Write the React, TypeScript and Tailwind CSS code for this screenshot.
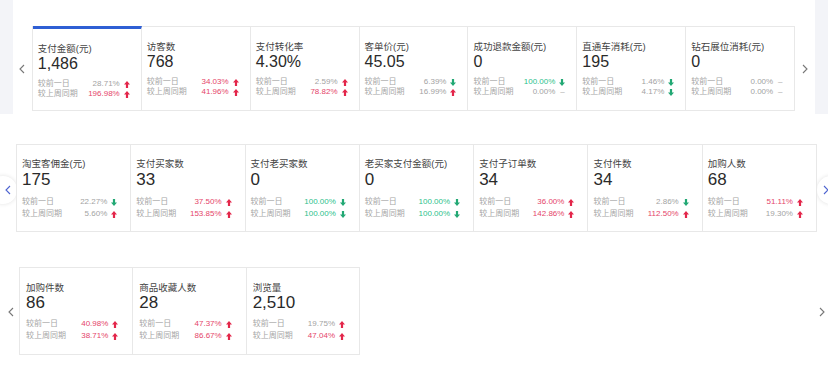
import React from 'react';

type Row = { p: string; dir: 'up' | 'down' | 'flat'; tone: 'gray' | 'red' | 'green' };
type Metric = { title: string; value: string; day: Row; week: Row };

const r = (p: string, dir: Row['dir'], tone: Row['tone']): Row => ({ p, dir, tone });

const row1: Metric[] = [
  { title: '支付金额(元)', value: '1,486', day: r('28.71%', 'up', 'gray'), week: r('196.98%', 'up', 'red') },
  { title: '访客数', value: '768', day: r('34.03%', 'up', 'red'), week: r('41.96%', 'up', 'red') },
  { title: '支付转化率', value: '4.30%', day: r('2.59%', 'up', 'gray'), week: r('78.82%', 'up', 'red') },
  { title: '客单价(元)', value: '45.05', day: r('6.39%', 'down', 'gray'), week: r('16.99%', 'up', 'gray') },
  { title: '成功退款金额(元)', value: '0', day: r('100.00%', 'down', 'green'), week: r('0.00%', 'flat', 'gray') },
  { title: '直通车消耗(元)', value: '195', day: r('1.46%', 'down', 'gray'), week: r('4.17%', 'down', 'gray') },
  { title: '钻石展位消耗(元)', value: '0', day: r('0.00%', 'flat', 'gray'), week: r('0.00%', 'flat', 'gray') },
];

const row2: Metric[] = [
  { title: '淘宝客佣金(元)', value: '175', day: r('22.27%', 'down', 'gray'), week: r('5.60%', 'up', 'gray') },
  { title: '支付买家数', value: '33', day: r('37.50%', 'up', 'red'), week: r('153.85%', 'up', 'red') },
  { title: '支付老买家数', value: '0', day: r('100.00%', 'down', 'green'), week: r('100.00%', 'down', 'green') },
  { title: '老买家支付金额(元)', value: '0', day: r('100.00%', 'down', 'green'), week: r('100.00%', 'down', 'green') },
  { title: '支付子订单数', value: '34', day: r('36.00%', 'up', 'red'), week: r('142.86%', 'up', 'red') },
  { title: '支付件数', value: '34', day: r('2.86%', 'down', 'gray'), week: r('112.50%', 'up', 'red') },
  { title: '加购人数', value: '68', day: r('51.11%', 'up', 'red'), week: r('19.30%', 'up', 'gray') },
];

const row3: Metric[] = [
  { title: '加购件数', value: '86', day: r('40.98%', 'up', 'red'), week: r('38.71%', 'up', 'red') },
  { title: '商品收藏人数', value: '28', day: r('47.37%', 'up', 'red'), week: r('86.67%', 'up', 'red') },
  { title: '浏览量', value: '2,510', day: r('19.75%', 'up', 'gray'), week: r('47.04%', 'up', 'red') },
];

const Mark = ({ dir }: { dir: Row['dir'] }) => {
  if (dir === 'flat') return <span className="w-[6px] text-center text-[#aaa]">–</span>;
  if (dir === 'up')
    return (
      <svg width="6" height="7" viewBox="0 0 6 7">
        <path d="M3 0L6 3.4H4.1V7H1.9V3.4H0Z" fill="#e3264a" />
      </svg>
    );
  return (
    <svg width="6" height="7" viewBox="0 0 6 7">
      <path d="M3 7L0 3.6H1.9V0H4.1V3.6H6Z" fill="#22a874" />
    </svg>
  );
};

const toneClass = (t: Row['tone']) =>
  t === 'red' ? 'text-[#e5456a]' : t === 'green' ? 'text-[#2cbf8c]' : 'text-[#a3a3a3]';

const Line = ({ label, row, lh }: { label: string; row: Row; lh: string }) => (
  <div className={`flex items-center justify-between text-[8px] ${lh}`}>
    <span className="text-[#a6a6a6]">{label}</span>
    <span className="flex items-center gap-[4px]">
      <span className={toneClass(row.tone)}>{row.p}</span>
      <Mark dir={row.dir} />
    </span>
  </div>
);

const Chevron = ({ right, color = '#777' }: { right?: boolean; color?: string }) => (
  <svg width="6" height="10" viewBox="0 0 6 10">
    <polyline
      points={right ? '1,1 5,5 1,9' : '5,1 1,5 5,9'}
      fill="none"
      stroke={color}
      strokeWidth="1.1"
    />
  </svg>
);

const Card = ({
  m,
  active,
  pad,
  rowLh,
  valueCls,
}: {
  m: Metric;
  active?: boolean;
  pad: string;
  rowLh: string;
  valueCls: string;
}) => (
  <div
    className={`flex flex-col border-r border-[#e8e8e8] bg-white ${pad} ${
      active ? '-mt-px border-t-[3px] border-t-[#2f5fd4] pt-[12px]' : ''
    }`}
  >
    <div className="text-[9.5px] leading-[12px] text-[#444] whitespace-nowrap">{m.title}</div>
    <div className={`text-[#2a2a2a] ${valueCls}`}>{m.value}</div>
    <div className="mt-[6px]">
      <Line label="较前一日" row={m.day} lh={rowLh} />
      <Line label="较上周同期" row={m.week} lh={rowLh} />
    </div>
  </div>
);

export default function App() {
  return (
    <div
      className="w-[828px] h-[369px] bg-white overflow-hidden"
      style={{ fontFamily: '"Liberation Sans", "Noto Sans CJK SC", sans-serif' }}
    >
      {/* first block */}
      <div className="h-[114px] bg-[#f3f4f8] px-[13px]">
        <div className="flex h-full bg-white pt-[26px]">
          <div className="flex h-[85px] w-[19px] items-center justify-center">
            <Chevron />
          </div>
          <div className="grid h-[85px] w-[770px] grid-cols-7 border-y border-l border-[#e8e8e8]">
            {row1.map((m, i) => (
              <Card
                key={m.title}
                m={m}
                active={i === 0}
                pad="pt-[14px] pl-[5px] pr-[11px]"
                rowLh="leading-[10px]"
                valueCls="text-[16px] leading-[18px]"
              />
            ))}
          </div>
          <div className="flex h-[85px] w-[20px] items-center justify-center">
            <Chevron right />
          </div>
        </div>
      </div>

      {/* second block */}
      <div className="mt-[30px] flex">
        <div className="relative h-[88px] w-[16px]">
          <div className="absolute left-[-11px] top-[32px] flex h-[28px] w-[28px] items-center justify-end rounded-full bg-white pr-[6px] shadow-[0_0_4px_rgba(0,0,0,0.12)]">
            <Chevron color="#4d63d0" />
          </div>
        </div>
        <div className="relative z-10 grid h-[88px] w-[801px] grid-cols-7 border-y border-l border-[#e8e8e8]">
          {row2.map((m) => (
            <Card
              key={m.title}
              m={m}
              pad="pt-[13px] pl-[5px] pr-[13px]"
              rowLh="leading-[12px]"
              valueCls="text-[17px] leading-[20px]"
            />
          ))}
        </div>
        <div className="relative h-[88px] w-[11px]">
          <div className="absolute left-0 top-[32px] flex h-[28px] w-[28px] items-center justify-start rounded-full bg-white pl-[6px] shadow-[0_0_4px_rgba(0,0,0,0.12)]">
            <Chevron right color="#4d63d0" />
          </div>
        </div>
      </div>

      {/* third block */}
      <div className="mt-[35px] flex">
        <div className="flex h-[88px] w-[19px] items-center justify-center pl-[2px] pt-[2px]">
          <Chevron />
        </div>
        <div className="grid h-[88px] w-[341px] grid-cols-3 border-y border-l border-[#e8e8e8]">
          {row3.map((m) => (
            <Card
              key={m.title}
              m={m}
              pad="pt-[14px] pl-[6px] pr-[14px]"
              rowLh="leading-[12px]"
              valueCls="text-[17px] leading-[18px]"
            />
          ))}
        </div>
        <div className="ml-auto flex h-[88px] w-[12px] items-center justify-center pt-[2px]">
          <Chevron right />
        </div>
      </div>
    </div>
  );
}
